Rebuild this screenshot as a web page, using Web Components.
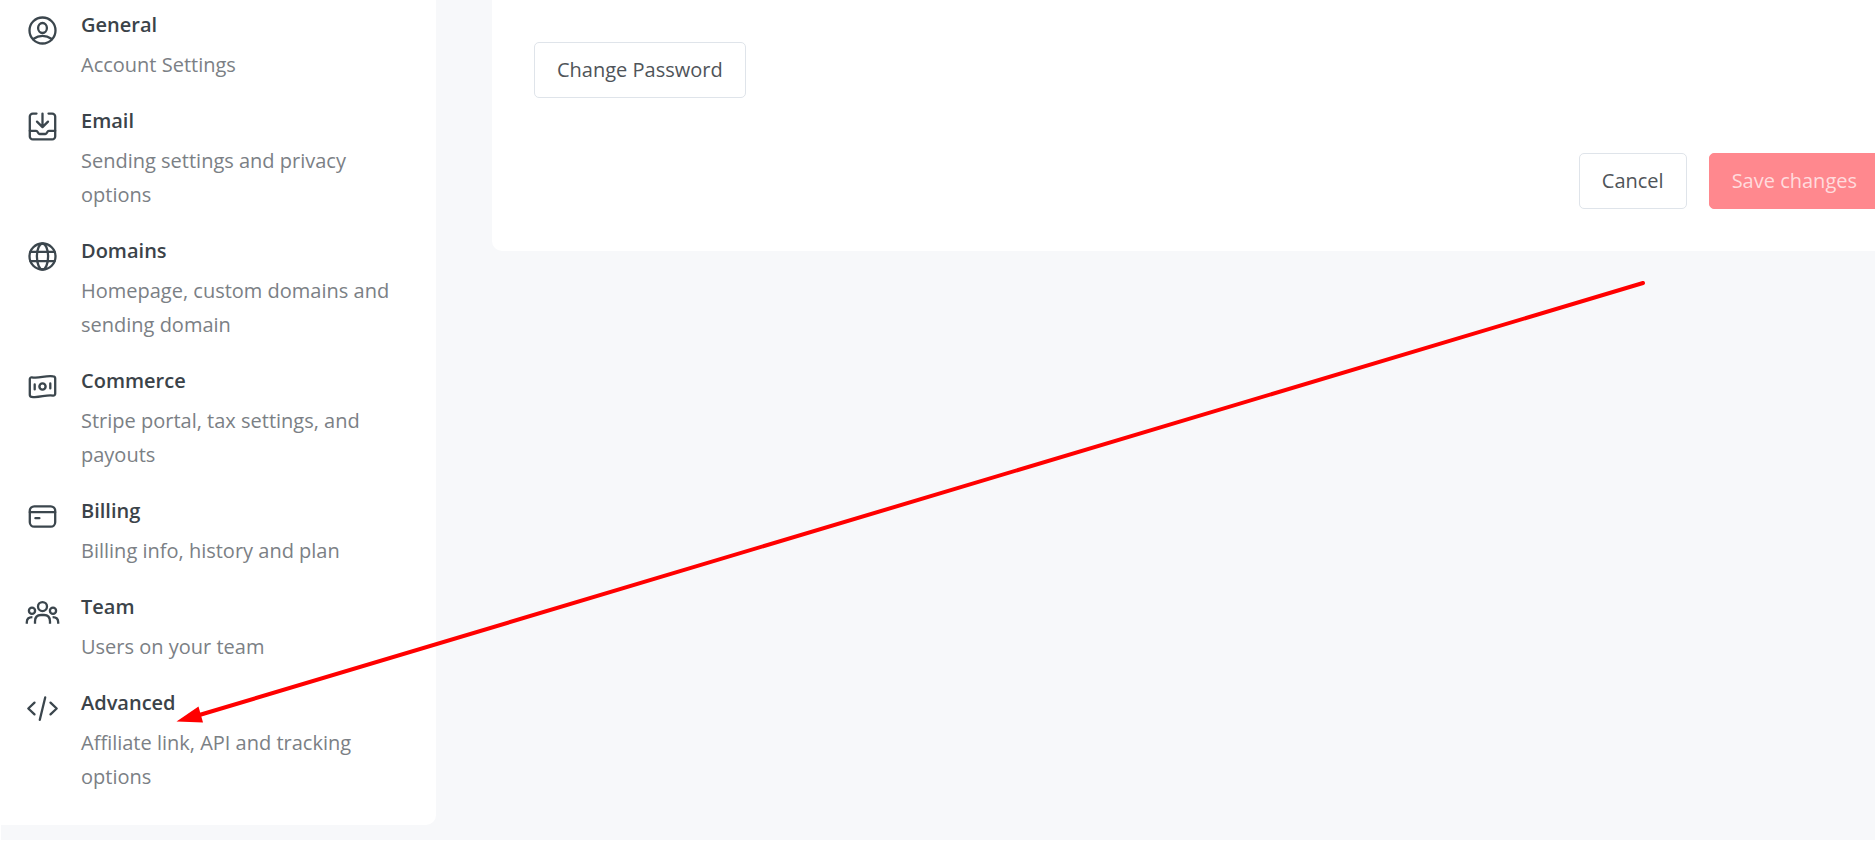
<!DOCTYPE html>
<html lang="en">
<head>
<meta charset="utf-8">
<meta name="viewport" content="width=device-width, initial-scale=1">
<title>Account Settings</title>
<style>
  body {
    margin: 0;
    background-color: #fff;
    font-family: "Open Sans", "Noto Sans", sans-serif;
    font-size: 20px;
  }
</style>
</head>
<body>
<settings-page>
  <settings-nav slot="nav">
    <nav-item icon="general" label="General">Account Settings</nav-item>
    <nav-item icon="email" label="Email">Sending settings and privacy options</nav-item>
    <nav-item icon="domains" label="Domains">Homepage, custom domains and sending domain</nav-item>
    <nav-item icon="commerce" label="Commerce">Stripe portal, tax settings, and payouts</nav-item>
    <nav-item icon="billing" label="Billing">Billing info, history and plan</nav-item>
    <nav-item icon="team" label="Team">Users on your team</nav-item>
    <nav-item icon="advanced" label="Advanced">Affiliate link, API and tracking options</nav-item>
  </settings-nav>
  <settings-card>
    <action-button>Change Password</action-button>
    <action-button slot="actions">Cancel</action-button>
    <action-button slot="actions" primary>Save changes</action-button>
  </settings-card>
</settings-page>
<pointer-arrow></pointer-arrow>

<script>
const icons = {
  general: `<circle cx="16.5" cy="16.5" r="13"/>
    <ellipse cx="16.5" cy="14" rx="4.4" ry="5"/>
    <path d="M7.2 25Q16.5 18.8 25.8 25"/>`,
  email: `<path d="M10.5 3.6H6.8a3 3 0 0 0-3 3v19.8a3 3 0 0 0 3 3h19.4a3 3 0 0 0 3-3V6.6a3 3 0 0 0-3-3h-3.7"/>
    <path d="M3.8 20.8h6.4c1.8 0 1.4 3.2 3.4 3.2h5.8c2 0 1.6-3.2 3.4-3.2h6.4"/>
    <path d="M16.5 3.6v13.2M11 11.6l5.5 5.5 5.5-5.5"/>`,
  domains: `<circle cx="16.5" cy="16.5" r="13"/>
    <ellipse cx="16.5" cy="16.5" rx="5.6" ry="13"/>
    <path d="M4.4 11.9h24.2M4.4 21.1h24.2"/>`,
  commerce: `<path d="M5.7 7.3C13 9 19 5.2 27.3 6.4a2.1 2.1 0 0 1 1.9 2.1v15.2a1.9 1.9 0 0 1-2.2 1.9C20 24.4 13 28.2 5.6 26.8a2.1 2.1 0 0 1-1.8-2.1V9a1.8 1.8 0 0 1 1.9-1.7z"/>
    <circle cx="16.5" cy="16.5" r="3.1" stroke-width="2.4"/>
    <path d="M8.7 14.4v5M24.3 13.4v5"/>`,
  billing: `<rect x="3.8" y="6.3" width="25.4" height="20.4" rx="4.5"/>
    <path d="M3.8 12.2h25.4M9.4 18.2h4"/>`,
  team: `<circle cx="16.5" cy="10.6" r="4.5"/>
    <circle cx="6" cy="14.8" r="3.1"/>
    <circle cx="27" cy="14.8" r="3.1"/>
    <g stroke-linecap="butt"><path d="M9 27.8v-2.4c0-4.2 2-6.4 6-6.4h3c4 0 6 2.2 6 6.4v2.4"/>
    <path d="M.8 27.8v-1.6c0-3.2 1.6-5 5.6-5M32.2 27.8v-1.6c0-3.2-1.6-5-5.6-5"/></g>`,
  advanced: `<path d="M8.5 10.6l-6.2 5.9 6.2 5.9M24.5 10.6l6.2 5.9-6.2 5.9M19.2 5.4l-5.4 22.4"/>`
};

class SettingsPage extends HTMLElement {
  connectedCallback() {
    this.attachShadow({ mode: "open" }).innerHTML = `
      <style>
        :host {
          display: block;
          padding-left: 1px;
          overflow: hidden;
        }
        .layout {
          display: flex;
          align-items: flex-start;
          gap: 56px;
          padding-bottom: 15px;
          background-color: #f7f8fa;
        }
        aside {
          flex: 0 0 435px;
        }
        /* the content column is wider than the window and runs off its right edge */
        main {
          flex: 1;
          min-width: 0;
          margin-right: -47px;
        }
      </style>
      <div class="layout">
        <aside><slot name="nav"></slot></aside>
        <main><slot></slot></main>
      </div>`;
  }
}

class SettingsNav extends HTMLElement {
  connectedCallback() {
    this.attachShadow({ mode: "open" }).innerHTML = `
      <style>
        :host {
          display: block;
          background-color: #fff;
          border-radius: 0 0 10px 0;
        }
        nav {
          display: flex;
          flex-direction: column;
          gap: 22px;
          padding: 8px 45px 31px 25px;
        }
      </style>
      <nav aria-label="Settings"><slot></slot></nav>`;
  }
}

class NavItem extends HTMLElement {
  connectedCallback() {
    const icon = this.getAttribute("icon");
    this.attachShadow({ mode: "open" }).innerHTML = `
      <style>
        :host {
          display: block;
        }
        a {
          display: flex;
          gap: 22px;
          color: #7b8085;
          line-height: 34px;
          text-decoration: none;
        }
        svg {
          flex: none;
          width: 33px;
          height: 33px;
          margin-top: 6px;
          overflow: visible;
          fill: none;
          stroke: #3b464d;
          stroke-width: 2.3;
          stroke-linecap: round;
          stroke-linejoin: round;
        }
        .text {
          display: flex;
          flex-direction: column;
          gap: 6px;
        }
        .label {
          color: #3b4349;
          font-weight: 600;
        }
      </style>
      <a href="#${icon}">
        <svg viewBox="0 0 33 33" aria-hidden="true">${icons[icon]}</svg>
        <span class="text">
          <span class="label">${this.getAttribute("label")}</span>
          <span><slot></slot></span>
        </span>
      </a>`;
  }
}

class SettingsCard extends HTMLElement {
  connectedCallback() {
    this.attachShadow({ mode: "open" }).innerHTML = `
      <style>
        :host {
          display: flex;
          flex-direction: column;
          gap: 55px;
          padding: 42px;
          background-color: #fff;
          border-radius: 0 0 10px 10px;
        }
        .actions {
          display: flex;
          justify-content: flex-end;
          gap: 22px;
        }
      </style>
      <div><slot></slot></div>
      <div class="actions"><slot name="actions"></slot></div>`;
  }
}

class ActionButton extends HTMLElement {
  connectedCallback() {
    this.attachShadow({ mode: "open" }).innerHTML = `
      <style>
        :host {
          display: flex;
        }
        button {
          padding: 13px 22px;
          background-color: #fff;
          border: 1px solid #dfe4ea;
          border-radius: 5px;
          color: #4f5459;
          font: inherit;
          line-height: 28px;
          white-space: nowrap;
          cursor: pointer;
        }
        :host([primary]) button {
          background-color: #ff888e;
          border-color: #ff888e;
          color: #ffdbdd;
        }
      </style>
      <button type="button"><slot></slot></button>`;
  }
}

class PointerArrow extends HTMLElement {
  connectedCallback() {
    this.attachShadow({ mode: "open" }).innerHTML = `
      <style>
        :host {
          position: absolute;
          left: 176px;
          top: 280px;
          pointer-events: none;
        }
        svg {
          display: block;
        }
      </style>
      <svg width="1472" height="446" viewBox="0 0 1472 446" aria-hidden="true">
        <path d="M20 436L1467 3" stroke="#f00" stroke-width="4" stroke-linecap="round"/>
        <path d="M.5 441.5L22.5 426.5L27 442.6z" fill="#f00"/>
      </svg>`;
  }
}

window.customElements.define("settings-page", SettingsPage);
window.customElements.define("settings-nav", SettingsNav);
window.customElements.define("nav-item", NavItem);
window.customElements.define("settings-card", SettingsCard);
window.customElements.define("action-button", ActionButton);
window.customElements.define("pointer-arrow", PointerArrow);
</script>
</body>
</html>
